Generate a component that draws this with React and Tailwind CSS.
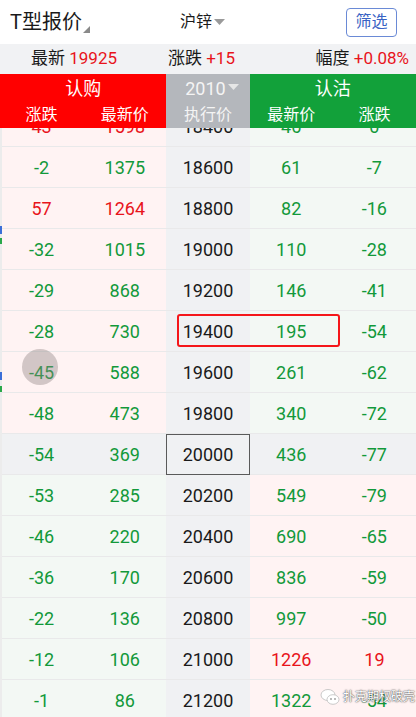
import React from 'react';

const R = 'text-[#e8141b]';
const G = 'text-[#12993a]';

const rows = [
  { k: '18400', cc: '43', cp: '1598', pp: '46', pc: '0', cr: true },
  { k: '18600', cc: '-2', cp: '1375', pp: '61', pc: '-7' },
  { k: '18800', cc: '57', cp: '1264', pp: '82', pc: '-16', cr: true },
  { k: '19000', cc: '-32', cp: '1015', pp: '110', pc: '-28' },
  { k: '19200', cc: '-29', cp: '868', pp: '146', pc: '-41' },
  { k: '19400', cc: '-28', cp: '730', pp: '195', pc: '-54' },
  { k: '19600', cc: '-45', cp: '588', pp: '261', pc: '-62' },
  { k: '19800', cc: '-48', cp: '473', pp: '340', pc: '-72' },
  { k: '20000', cc: '-54', cp: '369', pp: '436', pc: '-77', atm: true },
  { k: '20200', cc: '-53', cp: '285', pp: '549', pc: '-79', otm: true },
  { k: '20400', cc: '-46', cp: '220', pp: '690', pc: '-65', otm: true },
  { k: '20600', cc: '-36', cp: '170', pp: '836', pc: '-59', otm: true },
  { k: '20800', cc: '-22', cp: '136', pp: '997', pc: '-50', otm: true },
  { k: '21000', cc: '-12', cp: '106', pp: '1226', pc: '19', otm: true, pr: true },
  { k: '21200', cc: '-1', cp: '86', pp: '1322', pc: '-54', otm: true },
];

function Row({ r }) {
  let left = 'bg-[#fff3f3]';
  let right = 'bg-[#f3f8f4]';
  if (r.atm) {
    left = 'bg-[#f0f1f3]';
    right = 'bg-[#f0f1f3]';
  } else if (r.otm) {
    left = 'bg-[#f3f8f4]';
    right = 'bg-[#fff3f3]';
  }
  const cellBase = 'flex items-center justify-center border-b border-[#e9e9ea]';
  return (
    <div className="grid grid-cols-5 h-[41px] text-[18px]">
      <div className={`${cellBase} ${left} ${r.cr ? R : G}`}>{r.cc}</div>
      <div className={`${cellBase} ${left} ${r.cr ? R : G}`}>{r.cp}</div>
      <div
        className={
          r.atm
            ? 'flex items-center justify-center bg-[#f0f1f3] border border-[#5a5a5a] text-[#1a1a1a]'
            : `${cellBase} bg-[#f0f1f3] text-[#1a1a1a]`
        }
      >
        {r.k}
      </div>
      <div className={`${cellBase} ${right} ${r.pr ? R : G}`}>{r.pp}</div>
      <div className={`${cellBase} ${right} ${r.pr ? R : G}`}>{r.pc}</div>
    </div>
  );
}

export default function App() {
  return (
    <div
      className="relative w-[416px] h-[717px] overflow-hidden bg-white flex flex-col"
      style={{ fontFamily: 'Roboto, "Noto Sans CJK SC", sans-serif' }}
    >
      {/* top bar */}
      <div className="h-[44px] flex items-center px-[10px] bg-white">
        <div className="relative w-[170px] flex items-center">
          <span className="text-[20px] text-[#1a1a1a] leading-none">T型报价</span>
          <svg width="7" height="7" viewBox="0 0 7 7" className="ml-[1px] mt-[14px]">
            <polygon points="7,0 7,7 0,7" fill="#8a8a8a" />
          </svg>
        </div>
        <div className="flex items-center">
          <span className="text-[16px] text-[#1a1a1a]">沪锌</span>
          <svg width="11" height="6" viewBox="0 0 11 6" className="ml-[2px]">
            <polygon points="0,0 11,0 5.5,6" fill="#9a9a9a" />
          </svg>
        </div>
        <div className="ml-auto mr-[9px] w-[51px] h-[29px] border border-[#6a8ad6] rounded-[4px] flex items-center justify-center text-[16px] text-[#3a63c4]">
          筛选
        </div>
      </div>

      {/* quote line */}
      <div className="h-[30px] bg-[#f1f2f4] flex items-center text-[17px] text-[#1a1a1a] pl-[31px] pr-[7px]">
        <span>
          最新 <span className={R}>19925</span>
        </span>
        <span className="ml-[51px]">
          涨跌 <span className={R}>+15</span>
        </span>
        <span className="ml-auto">
          幅度 <span className={R}>+0.08%</span>
        </span>
      </div>

      {/* column header */}
      <div className="h-[54px] grid grid-cols-5 text-white">
        <div className="col-span-2 bg-[#ff0000] flex flex-col">
          <div className="h-[29px] flex items-center justify-center text-[18px]">认购</div>
          <div className="grid grid-cols-2 text-[16px]">
            <span className="text-center">涨跌</span>
            <span className="text-center">最新价</span>
          </div>
        </div>
        <div className="bg-[#b4b7bc] flex flex-col">
          <div className="h-[29px] flex items-center justify-center text-[18px] text-[#f4f4f4]">
            <span className="ml-[8px]">2010</span>
            <svg width="11" height="6" viewBox="0 0 11 6" className="ml-[2px] mb-[4px]">
              <polygon points="0,0 11,0 5.5,6" fill="#e6e6e6" />
            </svg>
          </div>
          <span className="text-center text-[16px] text-[#f4f4f4]">执行价</span>
        </div>
        <div className="col-span-2 bg-[#12a13a] flex flex-col">
          <div className="h-[29px] flex items-center justify-center text-[18px]">认沽</div>
          <div className="grid grid-cols-2 text-[16px]">
            <span className="text-center">最新价</span>
            <span className="text-center">涨跌</span>
          </div>
        </div>
      </div>

      {/* rows */}
      <div className="flex-1 overflow-hidden border-l-2 border-[#ececec]">
        <div className="-mt-[22px] -ml-[2px]">
          {rows.map((r) => (
            <Row key={r.k} r={r} />
          ))}
        </div>
      </div>

      {/* left edge marks */}
      <div className="absolute left-0 top-[226px] w-[2px] h-[8px] bg-[#3b6fd8]" />
      <div className="absolute left-0 top-[238px] w-[2px] h-[6px] bg-[#2aa84a]" />
      <div className="absolute left-0 top-[372px] w-[2px] h-[8px] bg-[#3b6fd8]" />
      <div className="absolute left-0 top-[386px] w-[2px] h-[6px] bg-[#2aa84a]" />

      {/* annotation box */}
      <div className="absolute left-[177px] top-[314px] w-[163px] h-[33px] border-2 border-[#f5161a] rounded-[3px]" />

      {/* touch indicator */}
      <div className="absolute left-[22px] top-[349px] w-[36px] h-[36px] rounded-full bg-[#8f8383]/40" />

      {/* watermark */}
      <div className="absolute left-[320px] top-[688px] flex items-center gap-[3px]">
        <svg width="20" height="18" viewBox="0 0 20 18">
          <ellipse cx="8" cy="7" rx="7" ry="5.5" fill="#ffffff" stroke="#bdbdbd" strokeWidth="0.8" />
          <ellipse cx="13" cy="11.5" rx="6" ry="4.8" fill="#ffffff" stroke="#bdbdbd" strokeWidth="0.8" />
          <circle cx="11" cy="11" r="0.9" fill="#9a9a9a" />
          <circle cx="15" cy="11" r="0.9" fill="#9a9a9a" />
        </svg>
        <span
          className="text-[12px] text-white"
          style={{ textShadow: '0 0 2px #555, 0 0 1px #333' }}
        >
          扑克期权破壳
        </span>
      </div>
    </div>
  );
}
